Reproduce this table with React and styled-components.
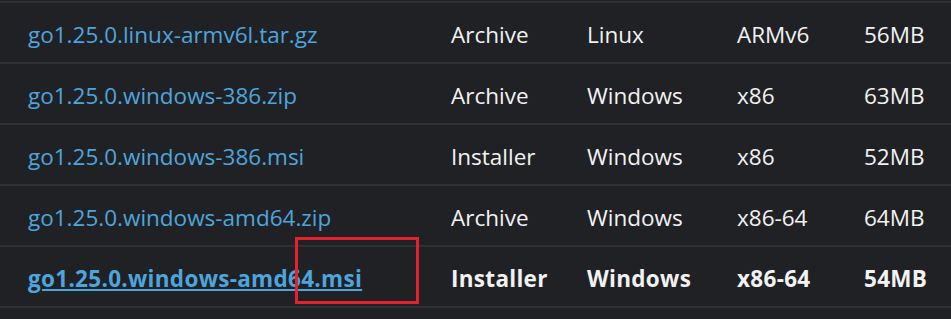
import styled, { createGlobalStyle } from "styled-components";

const Global = createGlobalStyle`
  html, body {
    margin: 0;
    background-color: #202124;
  }
  body {
    font-family: "Open Sans", "Noto Sans", sans-serif;
  }
`;

const Page = styled.div`
  position: relative;
  width: 951px;
  height: 319px;
  padding-top: 1px;
  box-sizing: border-box;
  background-color: #202124;
  overflow: hidden;
`;

const Table = styled.div`
  display: flex;
  flex-direction: column;
  border-bottom: 2px solid #2f3033;
`;

const Row = styled.div`
  display: grid;
  grid-template-columns: 423px 136px 150px 127px 1fr;
  height: 59px;
  border-top: 2px solid #2f3033;
  align-items: center;
  font-size: 22.5px;
  font-weight: ${(p) => (p.$bold ? 700 : 400)};
  letter-spacing: ${(p) => (p.$bold ? "0.3px" : "0")};
`;

const Cell = styled.div`
  padding-left: 28px;
  padding-top: 4px;
  color: #f2f2f2;
  white-space: nowrap;
`;

const Link = styled.a`
  color: #4ea5de;
  text-decoration: ${(p) => (p.$underline ? "underline" : "none")};
  text-underline-offset: 2px;
  text-decoration-thickness: 2px;
`;

const Highlight = styled.div`
  position: absolute;
  left: 295px;
  top: 237px;
  width: 124px;
  height: 67px;
  box-sizing: border-box;
  border: 3px solid #e3222e;
`;

const files = [
  ["go1.25.0.linux-armv6l.tar.gz", "Archive", "Linux", "ARMv6", "56MB"],
  ["go1.25.0.windows-386.zip", "Archive", "Windows", "x86", "63MB"],
  ["go1.25.0.windows-386.msi", "Installer", "Windows", "x86", "52MB"],
  ["go1.25.0.windows-amd64.zip", "Archive", "Windows", "x86-64", "64MB"],
  ["go1.25.0.windows-amd64.msi", "Installer", "Windows", "x86-64", "54MB", true],
];

function App() {
  return (
    <>
      <Global />
      <Page>
        <Table>
          {files.map(([name, kind, os, arch, size, bold]) => (
            <Row key={name} $bold={bold}>
              <Cell>
                <Link href="#" $underline={bold}>
                  {name}
                </Link>
              </Cell>
              <Cell>{kind}</Cell>
              <Cell>{os}</Cell>
              <Cell>{arch}</Cell>
              <Cell>{size}</Cell>
            </Row>
          ))}
        </Table>
        <Highlight />
      </Page>
    </>
  );
}

export default App;
